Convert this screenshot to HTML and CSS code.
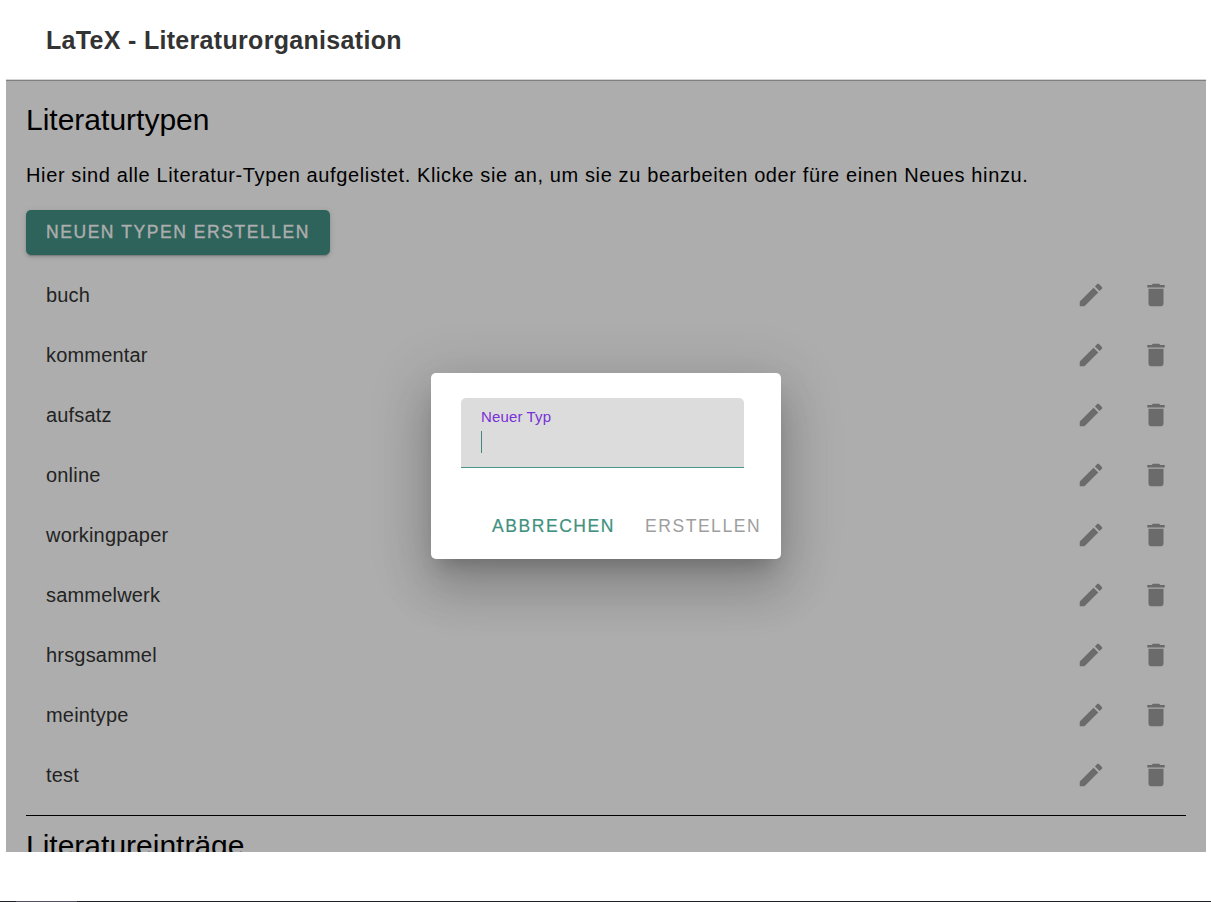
FILE: index.html
```html
<!DOCTYPE html>
<html lang="de">
<head>
<meta charset="utf-8">
<title>LaTeX - Literaturorganisation</title>
<link rel="stylesheet" href="styles.css">
</head>
<body>
<svg class="symbols" aria-hidden="true">
  <symbol id="edit" viewBox="0 0 24 24"><path d="M3 17.25V21h3.75L17.81 9.94l-3.75-3.75L3 17.25zM20.71 7.04c.39-.39.39-1.02 0-1.41l-2.34-2.34c-.39-.39-1.02-.39-1.41 0l-1.83 1.83 3.75 3.75 1.83-1.83z"/></symbol>
  <symbol id="delete" viewBox="0 0 24 24"><path d="M6 19c0 1.1.9 2 2 2h8c1.1 0 2-.9 2-2V7H6v12zM19 4h-3.5l-1-1h-5l-1 1H5v2h14V4z"/></symbol>
</svg>
<header class="title-bar"><span class="app-title">LaTeX - Literaturorganisation</span></header>
<main class="page">
  <h1 class="heading">Literaturtypen</h1>
  <p class="intro">Hier sind alle Literatur-Typen aufgelistet. Klicke sie an, um sie zu bearbeiten oder füre einen Neues hinzu.</p>
  <button class="create"><span>NEUEN TYPEN ERSTELLEN</span></button>
  <ul class="types">
    <li class="type"><span class="name">buch</span><svg class="icon"><use href="#edit"/></svg><svg class="icon"><use href="#delete"/></svg></li>
    <li class="type"><span class="name">kommentar</span><svg class="icon"><use href="#edit"/></svg><svg class="icon"><use href="#delete"/></svg></li>
    <li class="type"><span class="name">aufsatz</span><svg class="icon"><use href="#edit"/></svg><svg class="icon"><use href="#delete"/></svg></li>
    <li class="type"><span class="name">online</span><svg class="icon"><use href="#edit"/></svg><svg class="icon"><use href="#delete"/></svg></li>
    <li class="type"><span class="name">workingpaper</span><svg class="icon"><use href="#edit"/></svg><svg class="icon"><use href="#delete"/></svg></li>
    <li class="type"><span class="name">sammelwerk</span><svg class="icon"><use href="#edit"/></svg><svg class="icon"><use href="#delete"/></svg></li>
    <li class="type"><span class="name">hrsgsammel</span><svg class="icon"><use href="#edit"/></svg><svg class="icon"><use href="#delete"/></svg></li>
    <li class="type"><span class="name">meintype</span><svg class="icon"><use href="#edit"/></svg><svg class="icon"><use href="#delete"/></svg></li>
    <li class="type"><span class="name">test</span><svg class="icon"><use href="#edit"/></svg><svg class="icon"><use href="#delete"/></svg></li>
  </ul>
  <h1 class="heading next">Literatureinträge</h1>
  <div class="overlay">
    <div class="dialog" role="dialog">
      <div class="field">
        <span class="label">Neuer Typ</span>
        <span class="caret"></span>
      </div>
      <div class="actions">
        <button class="action cancel">ABBRECHEN</button>
        <button class="action confirm">ERSTELLEN</button>
      </div>
    </div>
  </div>
</main>
<footer class="edge"><span class="edge-tab"></span></footer>
</body>
</html>
```
FILE: styles.css
```css
* { box-sizing: border-box; }
body {
  margin: 0;
  height: 902px;
  overflow: hidden;
  display: flex;
  flex-direction: column;
  background: #fff;
  font-family: "Liberation Sans", Arial, sans-serif;
}
button { border: 0; font-family: inherit; }
.symbols { position: absolute; width: 0; height: 0; }
.title-bar {
  height: 79px;
  flex: none;
  padding: 25px 46px 0;
}
.app-title {
  font-size: 25px;
  line-height: 30px;
  font-weight: 700;
  letter-spacing: 0.3125px;
  color: #333;
}
.page {
  position: relative;
  height: 773px;
  flex: none;
  margin: 0 5px 0 6px;
  padding: 23px 20px 0;
  overflow: hidden;
  background: #adadad;
  border-top: 1px solid #d5d5d5;
  box-shadow: inset 0 1px #808080;
}
.heading {
  margin: 0;
  font-size: 30px;
  line-height: 34px;
  font-weight: 400;
  color: #000;
}
.intro {
  margin: 26px 0 0;
  font-size: 20px;
  line-height: 24px;
  letter-spacing: 0.625px;
  white-space: nowrap;
  color: #000;
}
.create {
  display: block;
  margin-top: 23px;
  width: 304px;
  height: 45px;
  padding: 0 0 1px 20px;
  text-align: left;
  border-radius: 5px;
  background: #2e635b;
  color: #adadad;
  font-size: 17.5px;
  letter-spacing: 1.5625px;
  -webkit-text-stroke: 0.4px #adadad;
  white-space: nowrap;
  box-shadow: 0 3px 1px -2px rgba(0,0,0,.14), 0 2px 3px rgba(0,0,0,.12), 0 1px 6px rgba(0,0,0,.1);
}
.types {
  list-style: none;
  margin: 0;
  padding: 10px 0;
  border-bottom: 1px solid #000;
}
.type {
  height: 60px;
  display: flex;
  align-items: center;
  gap: 35px;
  padding: 0 15px 0 20px;
}
.name {
  flex: 1;
  font-size: 20px;
  line-height: 24px;
  letter-spacing: 0.1875px;
  color: #232323;
}
.icon { width: 30px; height: 30px; fill: #6b6b6b; }
.next { margin-top: 13px; }
.overlay {
  position: absolute;
  inset: 0;
  padding: 293px 0 0 425px;
}
.dialog {
  width: 350px;
  height: 186px;
  padding: 25px 14px 0 30px;
  border-radius: 5px;
  background: #fff;
  box-shadow: 0 14px 19px -9px rgba(0,0,0,.2), 0 30px 48px 4px rgba(0,0,0,.14), 0 11px 58px 10px rgba(0,0,0,.12);
}
.field {
  display: flex;
  flex-direction: column;
  width: 283px;
  height: 70px;
  padding: 9px 20px 0;
  border-radius: 5px 5px 0 0;
  background: #dcdcdc;
  border-bottom: 1px solid #46948a;
}
.label {
  font-size: 15px;
  line-height: 20px;
  letter-spacing: 0.13px;
  color: #7931d8;
}
.caret { width: 1px; height: 22px; margin-top: 4px; background: #46857d; }
.actions {
  display: flex;
  gap: 30px;
  margin: 47px 0 0 31px;
}
.action {
  padding: 0;
  background: none;
  font-size: 17.5px;
  line-height: 22px;
  letter-spacing: 1.56px;
}
.cancel { color: #41917f; -webkit-text-stroke: 0.2px #41917f; }
.confirm { color: #9e9e9e; }
.edge {
  height: 1px;
  margin-top: auto;
  padding-left: 16px;
  background: #20202b;
}
.edge-tab { display: block; width: 61px; height: 1px; background: #504e60; }
```
